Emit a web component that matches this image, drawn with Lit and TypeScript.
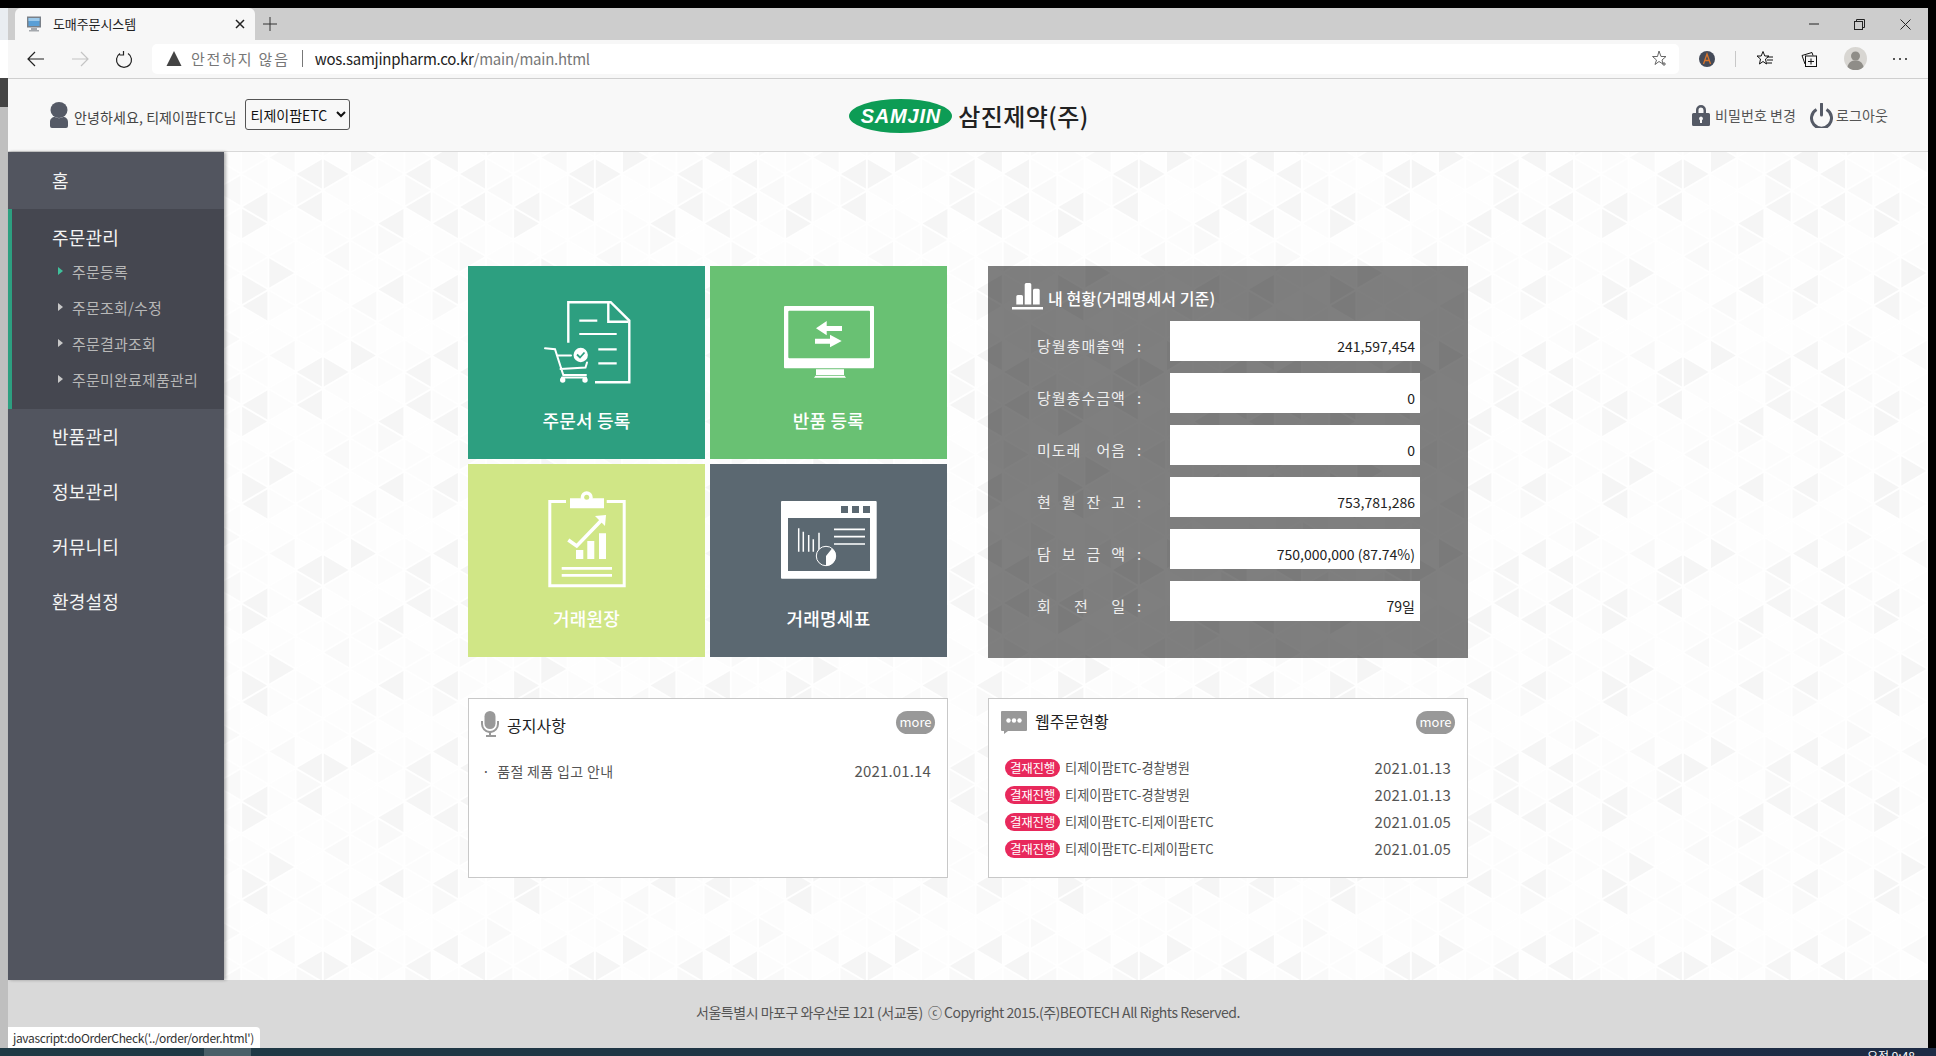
import { LitElement, html, css, svg } from "lit";
import { customElement } from "lit/decorators.js";

const W = 272, H = 198, CW = 27.2, RH = 33;
const DARK = new Set(["0L2","0L3","2L3","1R3","4L2","4R2","4L3","2R5","1R5","2L0","8L2","8L3","7L3","5R1","9L1","9L3","9L5","7L5"]);
const MID = new Set(["8R0","3L1","6R4","5L4","1L2","3R2","6L0","9R4","0R1","7R2"]);
function bgPolys() {
  const out: any[] = [];
  const add = (pts: number[][], fill: string) => {
    const xs = [0];
    const ys = [0];
    if (pts.some((p) => p[0] < 0)) xs.push(W);
    if (pts.some((p) => p[0] > W)) xs.push(-W);
    if (pts.some((p) => p[1] < 0)) ys.push(H);
    if (pts.some((p) => p[1] > H)) ys.push(-H);
    for (const dx of xs) for (const dy of ys) {
      const s = pts.map((p) => `${(p[0] + dx).toFixed(1)},${(p[1] + dy).toFixed(1)}`).join(" ");
      out.push(svg`<polygon points=${s} fill=${fill}></polygon>`);
    }
  };
  for (let k = 0; k < 10; k++) {
    const x = k * CW;
    for (let n = 0; n < 6; n++) {
      const yc = (k % 2 === 0 ? 6 : 22.5) + RH * n;
      for (const d of ["L", "R"]) {
        const s = d === "R" ? 1 : -1;
        const key = `${k}${d}${n}`;
        const h = (k * 7 + n * 13 + (d === "R" ? 5 : 0)) % 3;
        const fill = DARK.has(key) ? "#f5f5f5" : MID.has(key) ? "#f9f9f9" : ["#fefefe", "#fcfcfc", "#fdfdfd"][h];
        add([[x + s, yc - 14.5], [x + s, yc + 14.5], [x + s * (CW - 1.5), yc]], fill);
      }
    }
  }
  return out;
}
const POLYS = bgPolys();

const STATS: { parts: string[]; value: string }[] = [
  { parts: ["당월총매출액"], value: "241,597,454" },
  { parts: ["당월총수금액"], value: "0" },
  { parts: ["미도래", "어음"], value: "0" },
  { parts: ["현", "월", "잔", "고"], value: "753,781,286" },
  { parts: ["담", "보", "금", "액"], value: "750,000,000 (87.74%)" },
  { parts: ["회", "전", "일"], value: "79일" },
];
const ORDERS = [
  ["티제이팜ETC-경찰병원", "2021.01.13"],
  ["티제이팜ETC-경찰병원", "2021.01.13"],
  ["티제이팜ETC-티제이팜ETC", "2021.01.05"],
  ["티제이팜ETC-티제이팜ETC", "2021.01.05"],
];
const SUBS = ["주문등록", "주문조회/수정", "주문결과조회", "주문미완료제품관리"];

const cartIcon = svg`<svg class="ti" viewBox="0 0 237 130" fill="none" stroke="#fff">
  <path stroke-width="2.4" d="M100.3 76.7V36.2h42.4l18.6 18.4v61.7H127"/>
  <path stroke-width="2.4" d="M140.3 37v18.7H160"/>
  <path stroke-width="2.2" d="M111.3 54.7h18M111.3 68h37.4M130.3 83.3h18.4M130.3 97.3h18.4"/>
  <path stroke-width="2" stroke-linecap="round" d="M77 82.3l10 1 8.3 25.7H118M89 89.5h14M92.5 103l25-1.5 1.5-5M94 111.5h24"/>
  <circle cx="94.7" cy="114" r="2.7" fill="#fff" stroke="none"/><circle cx="117" cy="114" r="2.7" fill="#fff" stroke="none"/>
  <circle cx="112.7" cy="89" r="7.2" fill="#fff" stroke="none"/>
  <path stroke="#2d9f80" stroke-width="1.8" d="M109 88.5l3 3 4.5-5"/>
</svg>`;
const monitorIcon = svg`<svg class="ti" viewBox="0 0 237 130">
  <rect x="74" y="40" width="90" height="62.3" rx="1" fill="#fff"/>
  <rect x="78.3" y="44.7" width="81.7" height="47.6" rx="1" fill="#69c173"/>
  <path fill="#fff" d="M106 103.3h28v5.7h-28zM104 111.7l1.5-2h29l1.500 2z"/>
  <path fill="#fff" d="M106 62.300l10.700-7.300v5h15.300v5h-15.300v4.300zM131.700 75l-11.700-6.300v4h-15v5h15v3.600z"/>
</svg>`;
const ledgerIcon = svg`<svg class="ti" viewBox="0 0 237 130" fill="none" stroke="#fff">
  <path stroke-width="3" d="M98 37.500H81.800v84.300h74.400V37.500H138.700"/>
  <path fill="#fff" stroke="none" d="M102 34.300h34v10h-34z"/>
  <circle cx="118.700" cy="33.300" r="6" fill="#fff" stroke="none"/><circle cx="118.700" cy="33.300" r="2.500" fill="#d0e686" stroke="none"/>
  <path fill="#fff" stroke="none" d="M108 86h7.300v9H108zM119.300 77h7v18h-7zM131 69.300h7V95h-7z"/>
  <path stroke-width="3.600" d="M100.300 76l8.400 6 25-26"/>
  <path fill="#fff" stroke="none" d="M127 52l11-1-1 11z"/>
  <path stroke-width="2.800" d="M93.700 104.300H144M93.700 111.300H144"/>
</svg>`;
const chartIcon = svg`<svg class="ti" viewBox="0 0 237 130" fill="none">
  <rect x="71" y="37" width="95.700" height="77.700" rx="1" fill="#fff"/>
  <rect x="78" y="54" width="82" height="53" fill="#5b6871"/>
  <path fill="#5b6871" d="M131 42h7v7h-7zM142 42h7v7h-7zM153 42h7v7h-7z"/>
  <path stroke="#fff" stroke-width="1.500" d="M88.700 64.300v23.400M93.300 67.700v20M98.700 71v16.700M103.300 75.300v12.400M109 68.700v19"/>
  <path stroke="#fff" stroke-width="1.700" d="M124 65.300h31M124 72.700h31M124 80h31"/>
  <circle cx="116" cy="92" r="9.700" fill="#5b6871" stroke="#fff" stroke-width="1"/>
  <path fill="#fff" d="M116 92l6-7.600a9.700 9.700 0 0 1-6 17.300z"/>
</svg>`;

@customElement("app-root")
export class AppRoot extends LitElement {
  static styles = css`
    :host { display: block; position: relative; width: 1936px; height: 1056px; overflow: hidden; background: #000;
      font-family: "Noto Sans CJK KR", "Noto Sans", sans-serif; color: #333; }
    * { box-sizing: border-box; }
    svg { display: block; flex: none; }
    .black { height: 8px; background: #000; }
    .frame { display: flex; height: 1040px; }
    .lstrip { width: 8px; display: flex; flex-direction: column; background: #bfbfbf; }
    .lstrip i { display: block; }
    .s1 { height: 32px; background: #e9edf1; }
    .s2 { height: 38px; background: #fff; }
    .s3 { height: 29px; background: #444; }
    .win { width: 1920px; display: flex; flex-direction: column; background: #f8f8f8; }
    .rstrip { width: 8px; background: #000; }
    .tabs { height: 32px; background: #cdcdcd; display: flex; align-items: stretch; padding-left: 7px; }
    .tab { width: 240px; background: #f7f7f7; border-radius: 6px 6px 0 0; display: flex; align-items: center; padding: 0 10px 0 11px; font-size: 13px; color: #222; }
    .tab b { font-weight: 400; margin-left: 11px; flex: 1; letter-spacing: -.1px; line-height: 16px; }
    .plus { margin-left: 7px; align-self: center; }
    .winbtns { margin-left: auto; display: flex; align-items: center; gap: 35px; padding-right: 17px; }
    .toolbar { height: 39px; background: #f7f7f7; border-bottom: 1px solid #cfcfcf; display: flex; align-items: center; padding-bottom: 1px; }
    .nav { display: flex; align-items: center; gap: 24px; padding-left: 18px; width: 144px; }
    .addr { width: 1527px; height: 30px; background: #fff; border-radius: 5px; display: flex; align-items: center; padding-left: 14px; font-size: 15px; line-height: 20px; }
    .addr .warn { color: #777; margin-left: 9px; letter-spacing: 1.800px; }
    .addr .sep { width: 1px; height: 17px; background: #777; margin: 0 12px; }
    .addr .host { color: #222; letter-spacing: -.25px; }
    .addr .path { color: #777; letter-spacing: -.25px; }
    .addr .star { margin-left: auto; margin-right: 11px; }
    .tools { display: flex; align-items: center; flex: 1; padding-left: 20px; }
    .tools .vsep { width: 1px; height: 16px; background: #c8c8c8; margin: 0 20px; }
    .hdr { height: 73px; border-bottom: 1px solid #d8d8d8; background: #f8f8f8; display: grid; grid-template-columns: 1fr auto 1fr; align-items: center; padding: 0 40px 0 42px; }
    .hl { display: flex; align-items: center; }
    .hl .hello { font-size: 14px; line-height: 20px; margin-left: 6px; color: #444; letter-spacing: .1px; margin-top: 3px; }
    .hl select { margin-left: 8px; width: 105px; height: 31px; font: 14px "Noto Sans CJK KR", sans-serif; color: #111; border: 1px solid #555; border-radius: 3px; background: #f8f8f8; padding: 0 0 0 1px; margin-top: -1px; }
    .logo { display: flex; align-items: center; gap: 6px; margin-top: 2px; }
    .oval { width: 103px; height: 34px; border-radius: 50%; background: #0d9c55; color: #fff; display: flex; align-items: center; justify-content: center; font: italic 700 20px "Liberation Sans", sans-serif; letter-spacing: .8px; }
    .kname { font-size: 24px; font-weight: 500; line-height: 34px; color: #222; letter-spacing: .4px; }
    .hr { display: flex; align-items: center; justify-content: flex-end; font-size: 14px; color: #555; line-height: 18px; letter-spacing: .1px; }
    .hr span { margin-left: 5px; }
    .hr .pw { margin-left: 14px; }
    .body { flex: 1; display: flex; min-height: 0; }
    .side { width: 216px; background: #52555f; color: #fff; box-shadow: 2px 0 3px rgba(0,0,0,.3); position: relative; z-index: 1; font-size: 18px; letter-spacing: .2px; }
    .mi { display: flex; align-items: center; padding: 0 0 2px 44px; height: 55px; line-height: 24px; color: #f4f4f4; }
    .mi.home { height: 57px; }
    .sec { height: 200px; background: #454750; border-left: 4px solid #2d9f80; padding: 12px 0 10px 40px; }
    .sec .st { height: 34px; line-height: 32px; color: #f4f4f4; }
    .sub { height: 36px; display: flex; align-items: center; font-size: 15px; color: #b8b8b8; padding: 0 0 4px 6px; }
    .sub::before { content: ""; width: 0; height: 0; border-left: 5px solid #c8c8c8; border-top: 4px solid transparent; border-bottom: 4px solid transparent; margin-right: 9px; }
    .sub.on::before { border-left-color: #3fc09b; }
    .main { flex: 1; position: relative; padding: 114px 0 0 244px; overflow: hidden; }
    .bg { position: absolute; inset: 0; width: 100%; height: 100%; }
    .grid { position: relative; display: grid; grid-template-columns: 480px 480px; grid-template-rows: 392px 180px; column-gap: 40px; row-gap: 40px; }
    .tiles { display: grid; grid-template-columns: 237px 237px; grid-template-rows: 193px 193px; gap: 5px; }
    .tile { position: relative; color: #fff; display: flex; flex-direction: column; align-items: center; font-size: 18px; font-weight: 500; line-height: 24px; }
    .tile .ti { width: 237px; height: 130px; }
    .tile span { margin-top: 12px; letter-spacing: .2px; }
    .t1 { background: #2d9f80; } .t2 { background: #69c173; } .t3 { background: #d0e686; } .t4 { background: #5b6871; }
    .panel { background: rgba(0,0,0,.5); padding: 0 48px 0 24px; height: 392px; }
    .ptitle { height: 55px; display: flex; align-items: flex-start; padding-top: 16px; color: #fff; font-size: 16px; font-weight: 500; }
    .ptitle span { margin-left: 4px; line-height: 24px; margin-top: 4px; letter-spacing: .1px; }
    .row { display: flex; height: 40px; margin-bottom: 12px; align-items: center; color: #eee; font-size: 15px; padding-left: 25px; }
    .lab { width: 89px; flex: none; white-space: nowrap; display: flex; justify-content: space-between; line-height: 20px; margin-top: 9px; letter-spacing: 1px; }
    .lab em { font-style: normal; }
    .colon { width: 44px; flex: none; padding-left: 11px; line-height: 20px; margin-top: 9px; }
    .val { width: 250px; flex: none; height: 40px; background: #fff; color: #222; font-size: 14px; line-height: 20px; text-align: right; padding: 15px 5px 0 0; }
    .box { background: #fff; border: 1px solid #c8c8c8; position: relative; height: 180px; }
    .bh { display: flex; align-items: flex-start; padding: 12px 12px 0 12px; color: #222; font-size: 16px; line-height: 24px; height: 52px; }
    .more { position: absolute; right: 12px; top: 12px; width: 39px; height: 23px; border-radius: 11.5px; background: #999; color: #fff; font-size: 13px; line-height: 21px; text-align: center; }
    .n1 { margin: 2px 0 0 8px; }
    .n2 { margin: -2px 0 0 8px; }
    .nrow { display: flex; justify-content: space-between; align-items: center; height: 27px; padding: 0 16px 0 13px; font-size: 14px; color: #555; margin-top: 6px; }
    .nrow .t { letter-spacing: .35px; }
    .date { font-size: 15px; color: #555; line-height: 20px; letter-spacing: .15px; }
    .list { padding-top: 3px; }
    .orow { display: flex; align-items: center; height: 27px; padding: 0 16px 0 16px; font-size: 13.2px; color: #555; }
    .badge { width: 55px; height: 18px; border-radius: 9px; background: #e8295c; color: #fff; font-size: 12.500px; line-height: 18px; text-align: center; margin-right: 5px; letter-spacing: -.3px; }
    .orow .date { margin-left: auto; }
    .foot { height: 68px; background: #d9d9d9; display: flex; align-items: center; justify-content: center; font-size: 14px; line-height: 20px; color: #555; letter-spacing: -.5px; padding-bottom: 4px; }
    .status { position: absolute; left: 8px; top: 1027px; width: 252px; height: 21px; background: #fff; border-radius: 0 4px 0 0; font-size: 12px; line-height: 21px; padding-left: 5px; color: #333; letter-spacing: -.35px; z-index: 3; }
    .task { height: 8px; background: linear-gradient(90deg, #1f3a45, #1f3545 40%, #1d2b45); position: relative; overflow: hidden; display: flex; }
    .task .hl2 { width: 47px; margin-left: 204px; background: #4a5f68; }
    .task .clock { margin-left: auto; margin-right: 21px; color: #fff; font-size: 12px; line-height: 16px; }
  `;

  render() {
    const gray = "#555a66";
    return html`
      <div class="black"></div>
      <div class="frame">
        <div class="lstrip"><i class="s1"></i><i class="s2"></i><i class="s3"></i></div>
        <div class="win">
          <div class="tabs">
            <div class="tab">
              <svg width="16" height="16" viewBox="0 0 16 16"><rect x="1" y="0.500" width="14" height="11" fill="#7a8088"/><rect x="2.500" y="2" width="11" height="8" fill="#5a9fd6"/><rect x="2.500" y="2" width="11" height="3" fill="#9cc9ea"/><path d="M5 12h6v2H5zM3 14h10v1.500H3z" fill="#a5a9ae"/></svg>
              <b>도매주문시스템</b>
              <svg width="10" height="10" viewBox="0 0 10 10"><path d="M1 1l8 8M9 1l-8 8" stroke="#222" stroke-width="1.500"/></svg>
            </div>
            <svg class="plus" width="16" height="16" viewBox="0 0 16 16"><path d="M8 1v14M1 8h14" stroke="#333" stroke-width="1"/></svg>
            <div class="winbtns">
              <svg width="10" height="10" viewBox="0 0 10 10"><path d="M0 5h10" stroke="#222"/></svg>
              <svg width="11" height="11" viewBox="0 0 11 11" fill="none" stroke="#222"><rect x=".5" y="2.500" width="8" height="8"/><path d="M2.500 2.500v-2h8v8h-2"/></svg>
              <svg width="11" height="11" viewBox="0 0 11 11"><path d="M.5.5l10 10M10.500.5l-10 10" stroke="#222"/></svg>
            </div>
          </div>
          <div class="toolbar">
            <div class="nav">
              <svg width="20" height="20" viewBox="0 0 20 20" fill="none" stroke="#222" stroke-width="1.200"><path d="M18 10H2M9 3l-7 7 7 7"/></svg>
              <svg width="20" height="20" viewBox="0 0 20 20" fill="none" stroke="#c4c4c4" stroke-width="1.200"><path d="M2 10h16M11 3l7 7-7 7"/></svg>
              <svg width="20" height="20" viewBox="0 0 20 20" fill="none" stroke="#222" stroke-width="1.200"><path d="M6 4.500a7.500 7.500 0 1 0 8 0M9.500 2v4H5.500"/></svg>
            </div>
            <div class="addr">
              <svg width="16" height="15" viewBox="0 0 16 15"><path d="M8 0l7.500 15H.5z" fill="#444"/></svg>
              <span class="warn">안전하지 않음</span>
              <i class="sep"></i>
              <span class="host">wos.samjinpharm.co.kr</span><span class="path">/main/main.html</span>
              <svg class="star" width="17" height="17" viewBox="0 0 17 17" fill="none" stroke="#666"><path d="M8 1l2 5.500h5l-4 3.500 1 4-4-2.500-4 3 1.500-4.500L1.500 6.500h5zM13 12v4M11 14h4"/></svg>
            </div>
            <div class="tools">
              <svg width="16" height="16" viewBox="0 0 16 16"><circle cx="8" cy="8" r="8" fill="#444a58"/><path d="M4.500 13L8 3l3.500 10M6 9.500h4" fill="none" stroke="#d9742a" stroke-width="1.300"/></svg>
              <i class="vsep"></i>
              <svg width="18" height="17" viewBox="0 0 18 17" fill="none" stroke="#111"><path d="M7 1.500l1.800 4.500h4.200l-3.500 3 1 5-3.500-2.500L3.500 14l1-5L1 6h4.200z"/><path d="M11 7h6M11 10h6M11 13h5"/></svg>
              <svg style="margin-left:27px" width="16" height="16" viewBox="0 0 16 16" fill="none" stroke="#111"><rect x="4.500" y="5" width="11" height="10.500"/><path d="M10 7.500v6M7 10.500h6M4 13L1 4.500 11 1.500l1 3"/></svg>
              <svg style="margin-left:27px" width="23" height="23" viewBox="0 0 23 23"><circle cx="11.500" cy="11.500" r="11.500" fill="#d8d6d2"/><circle cx="11.500" cy="9" r="4.500" fill="#8f8d88"/><path d="M3.500 20c1-5 4-6.500 8-6.500s7 1.500 8 6.500a11.500 11.500 0 0 1-16 0z" fill="#8f8d88"/></svg>
              <svg style="margin-left:25px" width="16" height="4" viewBox="0 0 16 4" fill="#222"><circle cx="2" cy="2" r="1"/><circle cx="8" cy="2" r="1"/><circle cx="14" cy="2" r="1"/></svg>
            </div>
          </div>
          <div class="hdr">
            <div class="hl">
              <svg width="18" height="26" viewBox="0 0 18 26" fill="${gray}"><ellipse cx="9" cy="8" rx="8.500" ry="8"/><path d="M0 20c0-3 2-5 5-5 1.500 1.500 6.500 1.500 8 0 3 0 5 2 5 5v4a2 2 0 0 1-2 2H2a2 2 0 0 1-2-2z"/></svg>
              <span class="hello">안녕하세요, 티제이팜ETC님</span>
              <select><option>티제이팜ETC</option></select>
            </div>
            <div class="logo">
              <div class="oval">SAMJIN</div>
              <div class="kname">삼진제약(주)</div>
            </div>
            <div class="hr">
              <svg width="18" height="22" viewBox="0 0 18 22" fill="${gray}"><path fill-rule="evenodd" d="M4 9V6a5 5 0 0 1 10 0v3h2.500a1.500 1.500 0 0 1 1.500 1.500v10a1.500 1.500 0 0 1-1.500 1.500h-15A1.500 1.500 0 0 1 0 20.500v-10A1.500 1.500 0 0 1 1.500 9zM6.500 9h5V6a2.500 2.500 0 0 0-5 0zM9 12.500a2 2 0 0 0-1 3.700V19h2v-2.800a2 2 0 0 0-1-3.700z"/></svg>
              <span>비밀번호 변경</span>
              <svg class="pw" width="23" height="25" viewBox="0 0 23 25" fill="none" stroke="${gray}" stroke-width="3"><path d="M6.500 6.500a10 10 0 1 0 10 0"/><path d="M11.500 1v11" stroke-linecap="round"/></svg>
              <span style="margin-left:3px">로그아웃</span>
            </div>
          </div>
          <div class="body">
            <nav class="side">
              <div class="mi home">홈</div>
              <div class="sec">
                <div class="st">주문관리</div>
                ${SUBS.map((s, i) => html`<div class="sub ${i === 0 ? "on" : ""}">${s}</div>`)}
              </div>
              <div class="mi">반품관리</div>
              <div class="mi">정보관리</div>
              <div class="mi">커뮤니티</div>
              <div class="mi">환경설정</div>
            </nav>
            <main class="main">
              <svg class="bg" aria-hidden="true">
                <defs><pattern id="tri" patternUnits="userSpaceOnUse" x="262" y="148" width="${W}" height="${H}">
                  <rect width="${W}" height="${H}" fill="#fff"></rect>${POLYS}
                </pattern></defs>
                <rect width="100%" height="100%" fill="url(#tri)"></rect>
              </svg>
              <div class="grid">
                <div class="tiles">
                  <div class="tile t1">${cartIcon}<span>주문서 등록</span></div>
                  <div class="tile t2">${monitorIcon}<span>반품 등록</span></div>
                  <div class="tile t3">${ledgerIcon}<span>거래원장</span></div>
                  <div class="tile t4">${chartIcon}<span>거래명세표</span></div>
                </div>
                <section class="panel">
                  <div class="ptitle">
                    <svg width="32" height="28" viewBox="0 0 32 28" fill="#fff"><path d="M4.300 14.500a1.500 1.500 0 0 1 1.500-1.500h3.700a1.500 1.500 0 0 1 1.500 1.500v8.100H4.300zM12.700 2.500A1.500 1.500 0 0 1 14.200 1h3.600a1.500 1.500 0 0 1 1.500 1.500v20.100h-6.600zM21 8.200a1.500 1.500 0 0 1 1.500-1.500h3.700a1.500 1.500 0 0 1 1.500 1.500v14.400H21zM0 25h31v2.400H0z"/></svg>
                    <span>내 현황(거래명세서 기준)</span>
                  </div>
                  ${STATS.map((r) => html`<div class="row">
                    <div class="lab">${r.parts.map((p) => html`<em>${p}</em>`)}</div>
                    <div class="colon">:</div>
                    <div class="val">${r.value}</div>
                  </div>`)}
                </section>
                <section class="box">
                  <div class="bh">
                    <svg width="18" height="26" viewBox="0 0 18 26" fill="#999"><rect x="3.500" y="0" width="11" height="18" rx="5.500"/><path d="M0 10h2v3a7 7 0 0 0 14 0v-3h2v3a9 9 0 0 1-8 8.900V24h5v2H5v-2h3v-2.100A9 9 0 0 1 0 13z"/></svg>
                    <div class="n1">공지사항</div>
                  </div>
                  <div class="more">more</div>
                  <div class="nrow"><span class="t">· &nbsp;품절 제품 입고 안내</span><span class="date">2021.01.14</span></div>
                </section>
                <section class="box">
                  <div class="bh">
                    <svg width="26" height="23" viewBox="0 0 26 23" fill="#999"><path d="M0 1a1 1 0 0 1 1-1h24a1 1 0 0 1 1 1v18a1 1 0 0 1-1 1H7l-4 3v-3H1a1 1 0 0 1-1-1z"/><g fill="#fff"><circle cx="7.500" cy="9.500" r="2.200"/><circle cx="13" cy="9.500" r="2.200"/><circle cx="18.500" cy="9.500" r="2.200"/></g></svg>
                    <div class="n2">웹주문현황</div>
                  </div>
                  <div class="more">more</div>
                  <div class="list">
                    ${ORDERS.map((o) => html`<div class="orow"><span class="badge">결재진행</span><span>${o[0]}</span><span class="date">${o[1]}</span></div>`)}
                  </div>
                </section>
              </div>
            </main>
          </div>
          <footer class="foot">서울특별시 마포구 와우산로 121 (서교동) &nbsp;ⓒ Copyright 2015.(주)BEOTECH All Rights Reserved.</footer>
        </div>
        <div class="rstrip"></div>
      </div>
      <div class="task"><i class="hl2"></i><span class="clock">오전 9:48</span></div>
      <div class="status">javascript:doOrderCheck('../order/order.html')</div>
    `;
  }
}
